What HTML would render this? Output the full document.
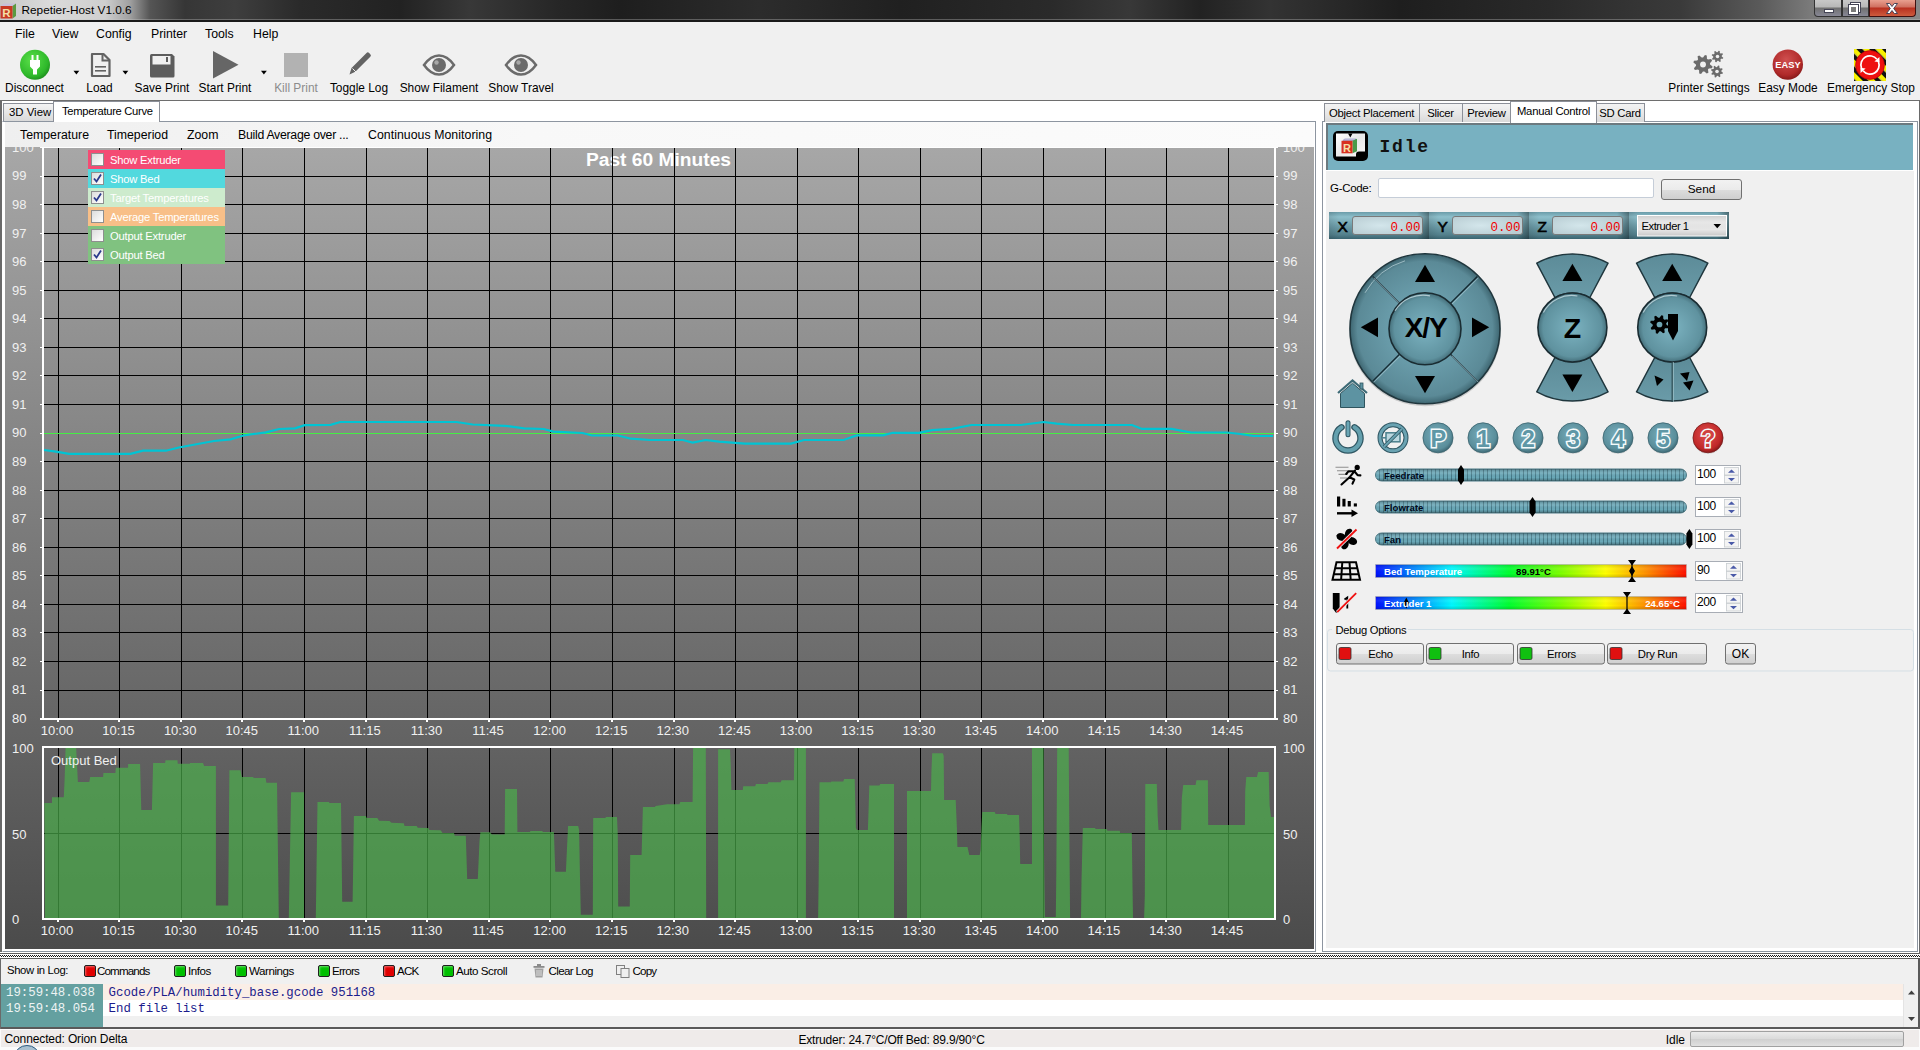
<!DOCTYPE html><html><head><meta charset="utf-8"><title>Repetier-Host</title><style>
*{box-sizing:border-box;margin:0;padding:0}
html,body{width:1920px;height:1050px;overflow:hidden;background:#f0f0f0;font-family:"Liberation Sans",sans-serif;color:#000}
.a{position:absolute}
.t{position:absolute;white-space:nowrap;line-height:1}
</style></head><body><div class="a" style="left:0;top:0;width:1920px;height:21px;background:linear-gradient(90deg,#c8c8c8 0px,#dadada 50px,#cfcfcf 105px,#a0a0a0 130px,#555 150px,#363636 185px,#3e3e3e 235px,#2a2a2a 300px,#222 400px,#383838 470px,#262626 560px,#1e1e1e 620px,#2c2c2c 760px,#202020 900px,#2a2a2a 1050px,#383838 1130px,#222 1200px,#333 1270px,#1e1e1e 1400px,#2a2a2a 1550px,#3a3a3a 1680px,#5a5a5a 1760px,#7a7a7a 1810px,#888 1920px)"></div><div class="a" style="left:0;top:19px;width:1920px;height:1px;background:rgba(200,200,200,0.35)"></div><div class="a" style="left:0;top:20px;width:1920px;height:2px;background:#1a1a1a"></div><svg class="a" style="left:0;top:2px" width="17" height="18"><path d="M1 4l3-2.5h12l-3 2.5z" fill="#c8c0d8"/><path d="M12.5 4l3.5-2.5v12.5l-3.5 2.5z" fill="#5a9a40"/><rect x="0.5" y="4" width="12" height="12.5" fill="#c83a24"/><text x="6.5" y="14.5" text-anchor="middle" font-family="Liberation Sans" font-weight="bold" font-size="11.5" fill="#f4e0a8">R</text></svg><div class="t" style="left:21.5px;top:4.8px;font-size:11.8px;color:#000">Repetier-Host V1.0.6</div><div class="a" style="left:1814px;top:0;width:28px;height:17px;border:1px solid #333;border-top:none;border-radius:0 0 0 4px;background:linear-gradient(#c8c8c8 0,#b8b8b8 7px,#707070 8px,#8a8a9a 17px)"></div><div class="a" style="left:1824px;top:9px;width:10px;height:4px;background:#fff;border:1px solid #445"></div><div class="a" style="left:1842px;top:0;width:27px;height:17px;border:1px solid #333;border-top:none;background:linear-gradient(#c8c8c8 0,#b8b8b8 7px,#707070 8px,#8a8a9a 17px)"></div><div class="a" style="left:1851px;top:3px;width:9px;height:9px;border:2px solid #fff;outline:1px solid #445"></div><div class="a" style="left:1849px;top:5px;width:9px;height:9px;border:2px solid #fff;background:#7a7a7a;outline:1px solid #445"></div><div class="a" style="left:1869px;top:0;width:47px;height:17px;border:1px solid #401010;border-top:none;border-radius:0 0 4px 0;background:linear-gradient(#e8a090 0,#d07060 7px,#b83020 8px,#d06040 17px)"></div><svg class="a" style="left:1884px;top:2px" width="16" height="13"><path d="M2.5 1.5h3.2l2.3 3l2.3-3h3.2l-3.8 5l3.8 5h-3.2l-2.3-3l-2.3 3h-3.2l3.8-5z" fill="#fff" stroke="#3a3a50" stroke-width="0.9"/></svg><div class="t" style="left:15px;top:27.59px;font-size:12.3px;">File</div><div class="t" style="left:52px;top:27.59px;font-size:12.3px;">View</div><div class="t" style="left:96px;top:27.59px;font-size:12.3px;">Config</div><div class="t" style="left:151px;top:27.59px;font-size:12.3px;">Printer</div><div class="t" style="left:205px;top:27.59px;font-size:12.3px;">Tools</div><div class="t" style="left:253px;top:27.59px;font-size:12.3px;">Help</div><div class="t" style="left:-165.5px;width:400px;text-align:center;top:83.23px;font-size:11.9px;color:#000">Disconnect</div><div class="t" style="left:-100.5px;width:400px;text-align:center;top:83.23px;font-size:11.9px;color:#000">Load</div><div class="t" style="left:-38.0px;width:400px;text-align:center;top:83.23px;font-size:11.9px;color:#000">Save Print</div><div class="t" style="left:25.0px;width:400px;text-align:center;top:83.23px;font-size:11.9px;color:#000">Start Print</div><div class="t" style="left:96.0px;width:400px;text-align:center;top:83.23px;font-size:11.9px;color:#8c8c8c">Kill Print</div><div class="t" style="left:159.0px;width:400px;text-align:center;top:83.23px;font-size:11.9px;color:#000">Toggle Log</div><div class="t" style="left:239.0px;width:400px;text-align:center;top:83.23px;font-size:11.9px;color:#000">Show Filament</div><div class="t" style="left:321.0px;width:400px;text-align:center;top:83.23px;font-size:11.9px;color:#000">Show Travel</div><div class="t" style="left:1509.0px;width:400px;text-align:center;top:83.23px;font-size:11.9px;color:#000">Printer Settings</div><div class="t" style="left:1588.0px;width:400px;text-align:center;top:83.23px;font-size:11.9px;color:#000">Easy Mode</div><div class="t" style="left:1671.0px;width:400px;text-align:center;top:83.23px;font-size:11.9px;color:#000">Emergency Stop</div><svg class="a" style="left:0;top:40px" width="1920" height="60" viewBox="0 40 1920 60"><defs><radialGradient id="gg" cx="0.4" cy="0.35" r="0.7"><stop offset="0" stop-color="#5be04a"/><stop offset="0.75" stop-color="#2eb82a"/><stop offset="1" stop-color="#1d8a1d"/></radialGradient><radialGradient id="rg" cx="0.4" cy="0.3" r="0.75"><stop offset="0" stop-color="#f05050"/><stop offset="0.7" stop-color="#c82020"/><stop offset="1" stop-color="#901010"/></radialGradient></defs><circle cx="35" cy="64.8" r="15" fill="url(#gg)"/><path d="M31.5 55h2v5h3v-5h2v5h1.5v6.5l-3 3v5h-4v-5l-3-3v-6.5h1.5z" fill="#fff"/><path d="M73.5 70.8h5.8l-2.9 3.6z" fill="#000"/><path d="M92 54h11.5l6 6v16h-17.5z" fill="none" stroke="#636363" stroke-width="2.2" stroke-linejoin="round"/><path d="M102.5 54v6.5h7" fill="none" stroke="#636363" stroke-width="2"/><rect x="95" y="66" width="11" height="1.6" fill="#636363"/><rect x="95" y="70" width="11" height="1.6" fill="#636363"/><path d="M122.5 70.8h5.8l-2.9 3.6z" fill="#000"/><path d="M150 55.5a1.5 1.5 0 0 1 1.5-1.5h20.5l2.5 2.5v19.5a1.5 1.5 0 0 1-1.5 1.5h-21.5a1.5 1.5 0 0 1-1.5-1.5z" fill="#5d5d5d"/><rect x="152.5" y="56" width="18" height="8.5" fill="#f0f0f0"/><rect x="166" y="57" width="2" height="5" fill="#5d5d5d"/><path d="M213 51v27.5l25.5-13.75z" fill="#666"/><path d="M261 70.8h5.8l-2.9 3.6z" fill="#000"/><rect x="284" y="53" width="24" height="24" fill="#b2b2b2"/><path d="M349.5 74.5l2-6.5 15-15a1.8 1.8 0 0 1 2.6 0l1.2 1.2a1.8 1.8 0 0 1 0 2.6l-15 15z" fill="#636363"/><path d="M352.5 68.5l3.5 3.5" stroke="#f0f0f0" stroke-width="1"/><path d="M424 65c5-7 10-9.5 15-9.5s10 2.5 15 9.5c-5 7-10 9.5-15 9.5s-10-2.5-15-9.5z" fill="none" stroke="#6b6b6b" stroke-width="2.5"/><circle cx="439" cy="65" r="7" fill="#6b6b6b"/><circle cx="436.5" cy="62.5" r="2.2" fill="#a8a8a8"/><path d="M506 65c5-7 10-9.5 15-9.5s10 2.5 15 9.5c-5 7-10 9.5-15 9.5s-10-2.5-15-9.5z" fill="none" stroke="#6b6b6b" stroke-width="2.5"/><circle cx="521" cy="65" r="7" fill="#6b6b6b"/><circle cx="518.5" cy="62.5" r="2.2" fill="#a8a8a8"/><polygon points="1712.60,66.45 1712.04,68.28 1708.85,68.44 1707.97,69.51 1708.41,72.67 1706.72,73.57 1704.35,71.43 1702.97,71.56 1701.05,74.10 1699.22,73.54 1699.06,70.35 1697.99,69.47 1694.83,69.91 1693.93,68.22 1696.07,65.85 1695.94,64.47 1693.40,62.55 1693.96,60.72 1697.15,60.56 1698.03,59.49 1697.59,56.33 1699.28,55.43 1701.65,57.57 1703.03,57.44 1704.95,54.90 1706.78,55.46 1706.94,58.65 1708.01,59.53 1711.17,59.09 1712.07,60.78 1709.93,63.15 1710.06,64.53" fill="#6b6b6b"/><circle cx="1703" cy="64.5" r="2.94" fill="#f0f0f0"/><polygon points="1723.28,57.67 1722.94,58.78 1721.02,58.87 1720.49,59.51 1720.76,61.42 1719.74,61.96 1718.31,60.67 1717.48,60.75 1716.33,62.28 1715.22,61.94 1715.13,60.02 1714.49,59.49 1712.58,59.76 1712.04,58.74 1713.33,57.31 1713.25,56.48 1711.72,55.33 1712.06,54.22 1713.98,54.13 1714.51,53.49 1714.24,51.58 1715.26,51.04 1716.69,52.33 1717.52,52.25 1718.67,50.72 1719.78,51.06 1719.87,52.98 1720.51,53.51 1722.42,53.24 1722.96,54.26 1721.67,55.69 1721.75,56.52" fill="#6b6b6b"/><circle cx="1717.5" cy="56.5" r="1.77" fill="#f0f0f0"/><polygon points="1722.98,72.71 1722.63,73.85 1720.64,73.95 1720.09,74.62 1720.37,76.58 1719.31,77.14 1717.84,75.81 1716.98,75.89 1715.79,77.48 1714.65,77.13 1714.55,75.14 1713.88,74.59 1711.92,74.87 1711.36,73.81 1712.69,72.34 1712.61,71.48 1711.02,70.29 1711.37,69.15 1713.36,69.05 1713.91,68.38 1713.63,66.42 1714.69,65.86 1716.16,67.19 1717.02,67.11 1718.21,65.52 1719.35,65.87 1719.45,67.86 1720.12,68.41 1722.08,68.13 1722.64,69.19 1721.31,70.66 1721.39,71.52" fill="#6b6b6b"/><circle cx="1717" cy="71.5" r="1.83" fill="#f0f0f0"/><defs><radialGradient id="rg2" cx="0.45" cy="0.35" r="0.7"><stop offset="0" stop-color="#d05050"/><stop offset="0.7" stop-color="#b02a2a"/><stop offset="1" stop-color="#7a1515"/></radialGradient></defs><circle cx="1787.8" cy="64.6" r="15.2" fill="url(#rg2)"/><text x="1788" y="68.2" text-anchor="middle" font-family="Liberation Sans" font-weight="bold" font-size="9.3" fill="#fff">EASY</text><defs><pattern id="haz" width="9" height="9" patternUnits="userSpaceOnUse" patternTransform="rotate(-45)"><rect width="4.5" height="9" fill="#111"/><rect x="4.5" width="4.5" height="9" fill="#f8f000"/></pattern></defs><rect x="1854" y="49" width="32" height="32" fill="url(#haz)"/><circle cx="1870" cy="65" r="14.5" fill="#ee1010" stroke="#a00" stroke-width="0.6"/><path d="M1861.5 68.1A9 9 0 0 1 1876.9 59.2 M1878.5 61.9A9 9 0 0 1 1863.1 70.8" fill="none" stroke="#fff" stroke-width="1.7"/><path d="M1879.6 62.3L1879.4 57L1874.4 61.4z M1860.4 67.7L1860.6 73L1865.6 68.6z" fill="#fff"/></svg><div class="a" style="left:0;top:100px;width:1920px;height:1px;background:#6e6e6e"></div><div class="a" style="left:0;top:101px;width:1322px;height:852px;background:#fff"></div><div class="a" style="left:0;top:101px;width:2px;height:851px;background:#6a6a6a"></div><div class="a" style="left:3px;top:103px;width:51px;height:19px;border:1px solid #8b8f98;border-bottom:none;background:linear-gradient(#f3f3f3,#e6e6e6 50%,#d8d8d8)"></div><div class="t" style="left:9px;top:107.35px;font-size:11.4px;">3D View</div><div class="a" style="left:2px;top:121px;width:1314px;height:831px;border:1px solid #8d95a0;border-left-color:#fff;background:#fff"></div><div class="a" style="left:53px;top:101px;width:107px;height:22px;border:1px solid #8b8f98;border-bottom:none;background:#fff"></div><div class="t" style="left:62px;top:106.02px;font-size:11.2px;letter-spacing:-0.3px">Temperature Curve</div><div class="a" style="left:5px;top:122px;width:1309px;height:25px;background:linear-gradient(90deg,#efefef,#f8f8f8 40%,#fbfbfb)"></div><div class="t" style="left:20px;top:128.59px;font-size:12.3px;letter-spacing:0px">Temperature</div><div class="t" style="left:107px;top:128.59px;font-size:12.3px;letter-spacing:0px">Timeperiod</div><div class="t" style="left:187px;top:128.59px;font-size:12.3px;letter-spacing:0px">Zoom</div><div class="t" style="left:238px;top:128.59px;font-size:12.3px;letter-spacing:-0.28px">Build Average over ...</div><div class="t" style="left:368px;top:128.59px;font-size:12.3px;letter-spacing:0.05px">Continuous Monitoring</div><svg class="a" style="left:0;top:0" width="1320" height="952" viewBox="0 0 1320 952" shape-rendering="crispEdges"><defs><linearGradient id="cbg" x1="0" y1="0" x2="0" y2="1"><stop offset="0" stop-color="#a7a7a7"/><stop offset="1" stop-color="#4b4b4b"/></linearGradient></defs><rect x="5" y="147" width="1309" height="802" fill="url(#cbg)"/><text x="658.5" y="165.8" text-anchor="middle" font-family="Liberation Sans" font-weight="bold" font-size="19.2" fill="#fff" shape-rendering="auto">Past 60 Minutes</text><rect x="58" y="147" width="1" height="571" fill="#000"/><rect x="57" y="720" width="2" height="2" fill="#fff"/><rect x="119" y="147" width="1" height="571" fill="#000"/><rect x="118" y="720" width="2" height="2" fill="#fff"/><rect x="181" y="147" width="1" height="571" fill="#000"/><rect x="180" y="720" width="2" height="2" fill="#fff"/><rect x="242" y="147" width="1" height="571" fill="#000"/><rect x="241" y="720" width="2" height="2" fill="#fff"/><rect x="304" y="147" width="1" height="571" fill="#000"/><rect x="303" y="720" width="2" height="2" fill="#fff"/><rect x="366" y="147" width="1" height="571" fill="#000"/><rect x="365" y="720" width="2" height="2" fill="#fff"/><rect x="427" y="147" width="1" height="571" fill="#000"/><rect x="426" y="720" width="2" height="2" fill="#fff"/><rect x="489" y="147" width="1" height="571" fill="#000"/><rect x="488" y="720" width="2" height="2" fill="#fff"/><rect x="550" y="147" width="1" height="571" fill="#000"/><rect x="549" y="720" width="2" height="2" fill="#fff"/><rect x="612" y="147" width="1" height="571" fill="#000"/><rect x="611" y="720" width="2" height="2" fill="#fff"/><rect x="674" y="147" width="1" height="571" fill="#000"/><rect x="673" y="720" width="2" height="2" fill="#fff"/><rect x="735" y="147" width="1" height="571" fill="#000"/><rect x="734" y="720" width="2" height="2" fill="#fff"/><rect x="797" y="147" width="1" height="571" fill="#000"/><rect x="796" y="720" width="2" height="2" fill="#fff"/><rect x="858" y="147" width="1" height="571" fill="#000"/><rect x="857" y="720" width="2" height="2" fill="#fff"/><rect x="920" y="147" width="1" height="571" fill="#000"/><rect x="919" y="720" width="2" height="2" fill="#fff"/><rect x="981" y="147" width="1" height="571" fill="#000"/><rect x="980" y="720" width="2" height="2" fill="#fff"/><rect x="1043" y="147" width="1" height="571" fill="#000"/><rect x="1042" y="720" width="2" height="2" fill="#fff"/><rect x="1105" y="147" width="1" height="571" fill="#000"/><rect x="1104" y="720" width="2" height="2" fill="#fff"/><rect x="1166" y="147" width="1" height="571" fill="#000"/><rect x="1165" y="720" width="2" height="2" fill="#fff"/><rect x="1228" y="147" width="1" height="571" fill="#000"/><rect x="1227" y="720" width="2" height="2" fill="#fff"/><rect x="44" y="176" width="1230" height="1" fill="#000"/><rect x="40" y="176" width="2" height="1" fill="#fff"/><rect x="1276" y="176" width="2" height="1" fill="#fff"/><rect x="44" y="204" width="1230" height="1" fill="#000"/><rect x="40" y="204" width="2" height="1" fill="#fff"/><rect x="1276" y="204" width="2" height="1" fill="#fff"/><rect x="44" y="233" width="1230" height="1" fill="#000"/><rect x="40" y="233" width="2" height="1" fill="#fff"/><rect x="1276" y="233" width="2" height="1" fill="#fff"/><rect x="44" y="261" width="1230" height="1" fill="#000"/><rect x="40" y="261" width="2" height="1" fill="#fff"/><rect x="1276" y="261" width="2" height="1" fill="#fff"/><rect x="44" y="290" width="1230" height="1" fill="#000"/><rect x="40" y="290" width="2" height="1" fill="#fff"/><rect x="1276" y="290" width="2" height="1" fill="#fff"/><rect x="44" y="318" width="1230" height="1" fill="#000"/><rect x="40" y="318" width="2" height="1" fill="#fff"/><rect x="1276" y="318" width="2" height="1" fill="#fff"/><rect x="44" y="347" width="1230" height="1" fill="#000"/><rect x="40" y="347" width="2" height="1" fill="#fff"/><rect x="1276" y="347" width="2" height="1" fill="#fff"/><rect x="44" y="375" width="1230" height="1" fill="#000"/><rect x="40" y="375" width="2" height="1" fill="#fff"/><rect x="1276" y="375" width="2" height="1" fill="#fff"/><rect x="44" y="404" width="1230" height="1" fill="#000"/><rect x="40" y="404" width="2" height="1" fill="#fff"/><rect x="1276" y="404" width="2" height="1" fill="#fff"/><rect x="44" y="433" width="1230" height="1" fill="#000"/><rect x="40" y="433" width="2" height="1" fill="#fff"/><rect x="1276" y="433" width="2" height="1" fill="#fff"/><rect x="44" y="461" width="1230" height="1" fill="#000"/><rect x="40" y="461" width="2" height="1" fill="#fff"/><rect x="1276" y="461" width="2" height="1" fill="#fff"/><rect x="44" y="490" width="1230" height="1" fill="#000"/><rect x="40" y="490" width="2" height="1" fill="#fff"/><rect x="1276" y="490" width="2" height="1" fill="#fff"/><rect x="44" y="518" width="1230" height="1" fill="#000"/><rect x="40" y="518" width="2" height="1" fill="#fff"/><rect x="1276" y="518" width="2" height="1" fill="#fff"/><rect x="44" y="547" width="1230" height="1" fill="#000"/><rect x="40" y="547" width="2" height="1" fill="#fff"/><rect x="1276" y="547" width="2" height="1" fill="#fff"/><rect x="44" y="575" width="1230" height="1" fill="#000"/><rect x="40" y="575" width="2" height="1" fill="#fff"/><rect x="1276" y="575" width="2" height="1" fill="#fff"/><rect x="44" y="604" width="1230" height="1" fill="#000"/><rect x="40" y="604" width="2" height="1" fill="#fff"/><rect x="1276" y="604" width="2" height="1" fill="#fff"/><rect x="44" y="632" width="1230" height="1" fill="#000"/><rect x="40" y="632" width="2" height="1" fill="#fff"/><rect x="1276" y="632" width="2" height="1" fill="#fff"/><rect x="44" y="661" width="1230" height="1" fill="#000"/><rect x="40" y="661" width="2" height="1" fill="#fff"/><rect x="1276" y="661" width="2" height="1" fill="#fff"/><rect x="44" y="690" width="1230" height="1" fill="#000"/><rect x="40" y="690" width="2" height="1" fill="#fff"/><rect x="1276" y="690" width="2" height="1" fill="#fff"/><rect x="42" y="147" width="2" height="573" fill="#fff"/><rect x="1274" y="147" width="2" height="573" fill="#fff"/><rect x="40" y="718" width="1238" height="2" fill="#fff"/><rect x="40" y="147" width="1238" height="1" fill="#fff"/><rect x="44" y="433" width="1230" height="1" fill="#44ee44"/></svg><svg class="a" style="left:0;top:0" width="1320" height="952" viewBox="0 0 1320 952"><polyline fill="none" stroke="#00c4d4" stroke-width="2.2" points="44,450 56,451.7 69,453.9 130.4,453.9 143,450.7 166,450.7 178.8,447.5 214,441 230.5,439.4 243.4,435.5 266,432.3 279,429 295,428.4 304.8,425.2 330.6,424.9 340.3,422 456.5,422 472.7,424.5 505,425.8 524,428.4 543.7,429 553.4,431.6 582.5,433 592,435.5 618,435.5 631,438.7 650,440 682.8,440 692.7,442.6 705.8,440 719,441.7 732,442.7 745,443.6 791,443.6 804,440 843.6,440 856.7,435.4 883,435.4 892.8,432.8 919,432.8 932,430.2 951.8,428.9 971.5,425 1020.7,425 1043.7,422 1056.8,423.6 1073,425 1132,425 1142,428.9 1171.6,428.9 1191,432.5 1227,432.5 1240.5,434 1253.7,436 1273,436"/></svg><svg class="a" style="left:0;top:0" width="1320" height="952" viewBox="0 0 1320 952"><rect x="58" y="748" width="1" height="170" fill="#000"/><rect x="57" y="920" width="2" height="2" fill="#fff"/><rect x="119" y="748" width="1" height="170" fill="#000"/><rect x="118" y="920" width="2" height="2" fill="#fff"/><rect x="181" y="748" width="1" height="170" fill="#000"/><rect x="180" y="920" width="2" height="2" fill="#fff"/><rect x="242" y="748" width="1" height="170" fill="#000"/><rect x="241" y="920" width="2" height="2" fill="#fff"/><rect x="304" y="748" width="1" height="170" fill="#000"/><rect x="303" y="920" width="2" height="2" fill="#fff"/><rect x="366" y="748" width="1" height="170" fill="#000"/><rect x="365" y="920" width="2" height="2" fill="#fff"/><rect x="427" y="748" width="1" height="170" fill="#000"/><rect x="426" y="920" width="2" height="2" fill="#fff"/><rect x="489" y="748" width="1" height="170" fill="#000"/><rect x="488" y="920" width="2" height="2" fill="#fff"/><rect x="550" y="748" width="1" height="170" fill="#000"/><rect x="549" y="920" width="2" height="2" fill="#fff"/><rect x="612" y="748" width="1" height="170" fill="#000"/><rect x="611" y="920" width="2" height="2" fill="#fff"/><rect x="674" y="748" width="1" height="170" fill="#000"/><rect x="673" y="920" width="2" height="2" fill="#fff"/><rect x="735" y="748" width="1" height="170" fill="#000"/><rect x="734" y="920" width="2" height="2" fill="#fff"/><rect x="797" y="748" width="1" height="170" fill="#000"/><rect x="796" y="920" width="2" height="2" fill="#fff"/><rect x="858" y="748" width="1" height="170" fill="#000"/><rect x="857" y="920" width="2" height="2" fill="#fff"/><rect x="920" y="748" width="1" height="170" fill="#000"/><rect x="919" y="920" width="2" height="2" fill="#fff"/><rect x="981" y="748" width="1" height="170" fill="#000"/><rect x="980" y="920" width="2" height="2" fill="#fff"/><rect x="1043" y="748" width="1" height="170" fill="#000"/><rect x="1042" y="920" width="2" height="2" fill="#fff"/><rect x="1105" y="748" width="1" height="170" fill="#000"/><rect x="1104" y="920" width="2" height="2" fill="#fff"/><rect x="1166" y="748" width="1" height="170" fill="#000"/><rect x="1165" y="920" width="2" height="2" fill="#fff"/><rect x="1228" y="748" width="1" height="170" fill="#000"/><rect x="1227" y="920" width="2" height="2" fill="#fff"/><rect x="44" y="833" width="1230" height="1" fill="#000"/><polygon fill="#4baf4c" fill-opacity="0.69" points="45,918.5 44.4,803.1 52.0,803.1 52.0,797.3 63.8,797.3 64.7,777.0 65.6,747.0 76.1,747.0 77.9,781.9 89.3,781.9 90.2,777.0 103.1,777.0 103.4,773.1 115.4,773.1 115.8,767.8 128.1,767.8 128.1,764.1 140.1,764.1 141.3,810.0 151.9,810.0 153.1,762.9 165.1,762.9 165.5,760.3 177.4,760.3 177.8,763.8 189.8,763.8 190.1,762.9 203.0,762.9 204.2,766.1 215.9,766.1 215.9,905.6 228.2,905.6 229.4,770.3 240.5,770.3 241.8,777.0 253.2,777.0 253.6,777.9 265.6,777.9 266.4,782.8 277.0,782.8 278.8,918.0 288.8,918.0 291.1,792.2 304.0,792.2 304.0,918.0 315.8,918.0 317.5,802.0 329.0,802.0 329.3,802.9 341.0,802.9 342.2,901.8 352.6,901.8 353.2,865.1 353.9,816.1 365.9,816.1 366.7,817.9 377.3,817.9 379.1,820.7 389.6,821.1 391.4,822.8 403.7,823.2 404.6,826.0 416.6,826.0 417.8,827.8 428.4,828.1 429.3,829.9 440.7,830.2 442.5,832.9 454.0,833.0 454.8,835.7 465.8,835.7 467.2,878.9 477.8,878.9 479.5,841.3 480.4,832.2 490.1,832.2 491.9,834.6 504.7,834.6 505.1,789.0 517.0,789.0 517.4,832.0 529.7,832.0 530.6,831.1 542.1,831.1 543.0,832.0 553.9,832.0 555.3,871.8 565.9,871.8 567.1,845.7 568.1,826.0 578.2,826.0 579.1,829.9 580.0,877.4 580.8,914.8 592.8,914.8 593.2,818.1 605.5,818.1 605.9,817.0 617.0,817.0 617.8,835.2 618.2,906.5 629.8,906.5 630.2,855.1 641.6,855.1 642.9,807.0 654.8,807.0 655.7,806.1 667.0,804.3 679.4,804.3 680.3,802.0 692.6,802.0 693.1,747.4 705.8,747.4 706.2,918.3 718.1,918.3 718.1,749.2 730.0,749.2 730.8,766.4 731.4,789.9 742.8,789.9 743.2,786.2 755.2,786.2 756.0,784.1 767.5,784.1 768.4,782.3 780.7,782.3 781.6,780.2 793.9,780.2 794.3,747.4 805.9,747.4 805.9,918.3 818.1,918.3 818.6,884.5 819.5,782.3 830.9,782.3 831.3,781.4 843.3,781.4 844.1,779.1 854.7,779.1 855.9,828.1 857.0,829.9 867.9,829.9 868.8,802.6 869.3,785.5 879.4,785.5 880.3,784.1 894.0,784.1 894.0,918.3 907.0,918.3 907.0,791.1 931.0,791.1 931.4,771.7 932.2,753.2 942.8,753.2 943.7,755.9 944.1,799.9 955.7,799.9 956.9,828.1 957.4,847.0 967.5,847.0 969.3,854.9 979.7,854.9 980.6,850.1 981.5,826.3 982.3,811.9 994.7,811.9 995.6,814.0 1007.0,814.0 1007.4,814.9 1019.0,814.9 1019.7,836.9 1020.2,863.9 1032.0,863.9 1032.0,747.4 1043.7,747.4 1044.0,853.7 1044.9,917.1 1055.8,917.1 1056.3,874.8 1057.2,747.4 1068.7,747.4 1069.6,861.6 1070.1,918.3 1081.0,918.3 1081.5,881.0 1082.8,828.1 1095.1,828.1 1095.5,829.0 1106.6,829.0 1107.4,830.7 1119.8,830.7 1120.1,832.9 1131.8,832.9 1132.5,886.3 1133.0,918.3 1144.1,918.3 1144.8,895.9 1145.3,784.1 1156.8,784.1 1157.7,815.8 1158.5,829.9 1181.1,829.9 1181.8,798.1 1183.2,784.9 1195.6,784.9 1196.4,780.2 1207.9,780.2 1208.2,824.9 1244.9,824.9 1245.2,791.1 1246.3,777.0 1256.9,777.0 1258.1,772.1 1268.7,772.1 1269.6,805.2 1271.0,817.0 1274.8,817.0 1274,918.5"/><rect x="42" y="746" width="1234" height="2" fill="#fff"/><rect x="42" y="746" width="2" height="174" fill="#fff"/><rect x="1274" y="746" width="2" height="174" fill="#fff"/><rect x="42" y="918" width="1234" height="2" fill="#fff"/></svg><div class="t" style="left:12px;top:140.90px;font-size:13px;color:#f0f0f0">100</div><div class="t" style="left:1283px;top:140.90px;font-size:13px;color:#f0f0f0">100</div><div class="t" style="left:12px;top:169.45px;font-size:13px;color:#f0f0f0">99</div><div class="t" style="left:1283px;top:169.45px;font-size:13px;color:#f0f0f0">99</div><div class="t" style="left:12px;top:198.01px;font-size:13px;color:#f0f0f0">98</div><div class="t" style="left:1283px;top:198.01px;font-size:13px;color:#f0f0f0">98</div><div class="t" style="left:12px;top:226.56px;font-size:13px;color:#f0f0f0">97</div><div class="t" style="left:1283px;top:226.56px;font-size:13px;color:#f0f0f0">97</div><div class="t" style="left:12px;top:255.12px;font-size:13px;color:#f0f0f0">96</div><div class="t" style="left:1283px;top:255.12px;font-size:13px;color:#f0f0f0">96</div><div class="t" style="left:12px;top:283.68px;font-size:13px;color:#f0f0f0">95</div><div class="t" style="left:1283px;top:283.68px;font-size:13px;color:#f0f0f0">95</div><div class="t" style="left:12px;top:312.23px;font-size:13px;color:#f0f0f0">94</div><div class="t" style="left:1283px;top:312.23px;font-size:13px;color:#f0f0f0">94</div><div class="t" style="left:12px;top:340.79px;font-size:13px;color:#f0f0f0">93</div><div class="t" style="left:1283px;top:340.79px;font-size:13px;color:#f0f0f0">93</div><div class="t" style="left:12px;top:369.34px;font-size:13px;color:#f0f0f0">92</div><div class="t" style="left:1283px;top:369.34px;font-size:13px;color:#f0f0f0">92</div><div class="t" style="left:12px;top:397.90px;font-size:13px;color:#f0f0f0">91</div><div class="t" style="left:1283px;top:397.90px;font-size:13px;color:#f0f0f0">91</div><div class="t" style="left:12px;top:426.46px;font-size:13px;color:#f0f0f0">90</div><div class="t" style="left:1283px;top:426.46px;font-size:13px;color:#f0f0f0">90</div><div class="t" style="left:12px;top:455.01px;font-size:13px;color:#f0f0f0">89</div><div class="t" style="left:1283px;top:455.01px;font-size:13px;color:#f0f0f0">89</div><div class="t" style="left:12px;top:483.57px;font-size:13px;color:#f0f0f0">88</div><div class="t" style="left:1283px;top:483.57px;font-size:13px;color:#f0f0f0">88</div><div class="t" style="left:12px;top:512.12px;font-size:13px;color:#f0f0f0">87</div><div class="t" style="left:1283px;top:512.12px;font-size:13px;color:#f0f0f0">87</div><div class="t" style="left:12px;top:540.68px;font-size:13px;color:#f0f0f0">86</div><div class="t" style="left:1283px;top:540.68px;font-size:13px;color:#f0f0f0">86</div><div class="t" style="left:12px;top:569.24px;font-size:13px;color:#f0f0f0">85</div><div class="t" style="left:1283px;top:569.24px;font-size:13px;color:#f0f0f0">85</div><div class="t" style="left:12px;top:597.79px;font-size:13px;color:#f0f0f0">84</div><div class="t" style="left:1283px;top:597.79px;font-size:13px;color:#f0f0f0">84</div><div class="t" style="left:12px;top:626.35px;font-size:13px;color:#f0f0f0">83</div><div class="t" style="left:1283px;top:626.35px;font-size:13px;color:#f0f0f0">83</div><div class="t" style="left:12px;top:654.90px;font-size:13px;color:#f0f0f0">82</div><div class="t" style="left:1283px;top:654.90px;font-size:13px;color:#f0f0f0">82</div><div class="t" style="left:12px;top:683.46px;font-size:13px;color:#f0f0f0">81</div><div class="t" style="left:1283px;top:683.46px;font-size:13px;color:#f0f0f0">81</div><div class="t" style="left:12px;top:712.02px;font-size:13px;color:#f0f0f0">80</div><div class="t" style="left:1283px;top:712.02px;font-size:13px;color:#f0f0f0">80</div><div class="t" style="left:-143.0px;width:400px;text-align:center;top:724.00px;font-size:13px;color:#f0f0f0">10:00</div><div class="t" style="left:-143.0px;width:400px;text-align:center;top:924.00px;font-size:13px;color:#f0f0f0">10:00</div><div class="t" style="left:-81.42px;width:400px;text-align:center;top:724.00px;font-size:13px;color:#f0f0f0">10:15</div><div class="t" style="left:-81.42px;width:400px;text-align:center;top:924.00px;font-size:13px;color:#f0f0f0">10:15</div><div class="t" style="left:-19.839999999999975px;width:400px;text-align:center;top:724.00px;font-size:13px;color:#f0f0f0">10:30</div><div class="t" style="left:-19.839999999999975px;width:400px;text-align:center;top:924.00px;font-size:13px;color:#f0f0f0">10:30</div><div class="t" style="left:41.74000000000001px;width:400px;text-align:center;top:724.00px;font-size:13px;color:#f0f0f0">10:45</div><div class="t" style="left:41.74000000000001px;width:400px;text-align:center;top:924.00px;font-size:13px;color:#f0f0f0">10:45</div><div class="t" style="left:103.32px;width:400px;text-align:center;top:724.00px;font-size:13px;color:#f0f0f0">11:00</div><div class="t" style="left:103.32px;width:400px;text-align:center;top:924.00px;font-size:13px;color:#f0f0f0">11:00</div><div class="t" style="left:164.89999999999998px;width:400px;text-align:center;top:724.00px;font-size:13px;color:#f0f0f0">11:15</div><div class="t" style="left:164.89999999999998px;width:400px;text-align:center;top:924.00px;font-size:13px;color:#f0f0f0">11:15</div><div class="t" style="left:226.48000000000002px;width:400px;text-align:center;top:724.00px;font-size:13px;color:#f0f0f0">11:30</div><div class="t" style="left:226.48000000000002px;width:400px;text-align:center;top:924.00px;font-size:13px;color:#f0f0f0">11:30</div><div class="t" style="left:288.06px;width:400px;text-align:center;top:724.00px;font-size:13px;color:#f0f0f0">11:45</div><div class="t" style="left:288.06px;width:400px;text-align:center;top:924.00px;font-size:13px;color:#f0f0f0">11:45</div><div class="t" style="left:349.64px;width:400px;text-align:center;top:724.00px;font-size:13px;color:#f0f0f0">12:00</div><div class="t" style="left:349.64px;width:400px;text-align:center;top:924.00px;font-size:13px;color:#f0f0f0">12:00</div><div class="t" style="left:411.22px;width:400px;text-align:center;top:724.00px;font-size:13px;color:#f0f0f0">12:15</div><div class="t" style="left:411.22px;width:400px;text-align:center;top:924.00px;font-size:13px;color:#f0f0f0">12:15</div><div class="t" style="left:472.79999999999995px;width:400px;text-align:center;top:724.00px;font-size:13px;color:#f0f0f0">12:30</div><div class="t" style="left:472.79999999999995px;width:400px;text-align:center;top:924.00px;font-size:13px;color:#f0f0f0">12:30</div><div class="t" style="left:534.38px;width:400px;text-align:center;top:724.00px;font-size:13px;color:#f0f0f0">12:45</div><div class="t" style="left:534.38px;width:400px;text-align:center;top:924.00px;font-size:13px;color:#f0f0f0">12:45</div><div class="t" style="left:595.96px;width:400px;text-align:center;top:724.00px;font-size:13px;color:#f0f0f0">13:00</div><div class="t" style="left:595.96px;width:400px;text-align:center;top:924.00px;font-size:13px;color:#f0f0f0">13:00</div><div class="t" style="left:657.54px;width:400px;text-align:center;top:724.00px;font-size:13px;color:#f0f0f0">13:15</div><div class="t" style="left:657.54px;width:400px;text-align:center;top:924.00px;font-size:13px;color:#f0f0f0">13:15</div><div class="t" style="left:719.12px;width:400px;text-align:center;top:724.00px;font-size:13px;color:#f0f0f0">13:30</div><div class="t" style="left:719.12px;width:400px;text-align:center;top:924.00px;font-size:13px;color:#f0f0f0">13:30</div><div class="t" style="left:780.6999999999999px;width:400px;text-align:center;top:724.00px;font-size:13px;color:#f0f0f0">13:45</div><div class="t" style="left:780.6999999999999px;width:400px;text-align:center;top:924.00px;font-size:13px;color:#f0f0f0">13:45</div><div class="t" style="left:842.28px;width:400px;text-align:center;top:724.00px;font-size:13px;color:#f0f0f0">14:00</div><div class="t" style="left:842.28px;width:400px;text-align:center;top:924.00px;font-size:13px;color:#f0f0f0">14:00</div><div class="t" style="left:903.8599999999999px;width:400px;text-align:center;top:724.00px;font-size:13px;color:#f0f0f0">14:15</div><div class="t" style="left:903.8599999999999px;width:400px;text-align:center;top:924.00px;font-size:13px;color:#f0f0f0">14:15</div><div class="t" style="left:965.44px;width:400px;text-align:center;top:724.00px;font-size:13px;color:#f0f0f0">14:30</div><div class="t" style="left:965.44px;width:400px;text-align:center;top:924.00px;font-size:13px;color:#f0f0f0">14:30</div><div class="t" style="left:1027.02px;width:400px;text-align:center;top:724.00px;font-size:13px;color:#f0f0f0">14:45</div><div class="t" style="left:1027.02px;width:400px;text-align:center;top:924.00px;font-size:13px;color:#f0f0f0">14:45</div><div class="t" style="left:12px;top:741.50px;font-size:13px;color:#f0f0f0">100</div><div class="t" style="left:1283px;top:741.50px;font-size:13px;color:#f0f0f0">100</div><div class="t" style="left:12px;top:827.50px;font-size:13px;color:#f0f0f0">50</div><div class="t" style="left:1283px;top:827.50px;font-size:13px;color:#f0f0f0">50</div><div class="t" style="left:12px;top:913.00px;font-size:13px;color:#f0f0f0">0</div><div class="t" style="left:1283px;top:913.00px;font-size:13px;color:#f0f0f0">0</div><div class="t" style="left:51px;top:754.00px;font-size:13px;color:#f0f0f0">Output Bed</div><div class="a" style="left:5px;top:122px;width:1309px;height:25px;background:linear-gradient(90deg,#efefef,#f8f8f8 40%,#fbfbfb)"></div><div class="t" style="left:20px;top:128.59px;font-size:12.3px;letter-spacing:0px">Temperature</div><div class="t" style="left:107px;top:128.59px;font-size:12.3px;letter-spacing:0px">Timeperiod</div><div class="t" style="left:187px;top:128.59px;font-size:12.3px;letter-spacing:0px">Zoom</div><div class="t" style="left:238px;top:128.59px;font-size:12.3px;letter-spacing:-0.28px">Build Average over ...</div><div class="t" style="left:368px;top:128.59px;font-size:12.3px;letter-spacing:0.05px">Continuous Monitoring</div><div class="a" style="left:88px;top:150px;width:137px;height:19px;background:#f44b73"></div><div class="a" style="left:91px;top:153px;width:13px;height:13px;border:1px solid #8e8f8f;background:linear-gradient(135deg,#dcdcdc,#fff)"></div><div class="t" style="left:110px;top:154.52px;font-size:11.2px;color:#fff;letter-spacing:-0.2px">Show Extruder</div><div class="a" style="left:88px;top:169px;width:137px;height:19px;background:#52d9de"></div><div class="a" style="left:91px;top:172px;width:13px;height:13px;border:1px solid #8e8f8f;background:linear-gradient(135deg,#dcdcdc,#fff)"></div><svg class="a" style="left:91px;top:172px" width="13" height="13"><path d="M3 6.5l2.5 3 4.5-7" fill="none" stroke="#2a3a8c" stroke-width="1.8"/></svg><div class="t" style="left:110px;top:173.52px;font-size:11.2px;color:#fff;letter-spacing:-0.2px">Show Bed</div><div class="a" style="left:88px;top:188px;width:137px;height:19px;background:#cdebcd"></div><div class="a" style="left:91px;top:191px;width:13px;height:13px;border:1px solid #8e8f8f;background:linear-gradient(135deg,#dcdcdc,#fff)"></div><svg class="a" style="left:91px;top:191px" width="13" height="13"><path d="M3 6.5l2.5 3 4.5-7" fill="none" stroke="#2a3a8c" stroke-width="1.8"/></svg><div class="t" style="left:110px;top:192.52px;font-size:11.2px;color:#fff;letter-spacing:-0.2px">Target Temperatures</div><div class="a" style="left:88px;top:207px;width:137px;height:19px;background:#f8bf88"></div><div class="a" style="left:91px;top:210px;width:13px;height:13px;border:1px solid #8e8f8f;background:linear-gradient(135deg,#dcdcdc,#fff)"></div><div class="t" style="left:110px;top:211.52px;font-size:11.2px;color:#fff;letter-spacing:-0.2px">Average Temperatures</div><div class="a" style="left:88px;top:226px;width:137px;height:19px;background:#80c280"></div><div class="a" style="left:91px;top:229px;width:13px;height:13px;border:1px solid #8e8f8f;background:linear-gradient(135deg,#dcdcdc,#fff)"></div><div class="t" style="left:110px;top:230.52px;font-size:11.2px;color:#fff;letter-spacing:-0.2px">Output Extruder</div><div class="a" style="left:88px;top:245px;width:137px;height:19px;background:#80c280"></div><div class="a" style="left:91px;top:248px;width:13px;height:13px;border:1px solid #8e8f8f;background:linear-gradient(135deg,#dcdcdc,#fff)"></div><svg class="a" style="left:91px;top:248px" width="13" height="13"><path d="M3 6.5l2.5 3 4.5-7" fill="none" stroke="#2a3a8c" stroke-width="1.8"/></svg><div class="t" style="left:110px;top:249.52px;font-size:11.2px;color:#fff;letter-spacing:-0.2px">Output Bed</div><div class="a" style="left:1316px;top:101px;width:604px;height:852px;background:#fff"></div><div class="a" style="left:1316px;top:949px;width:10px;height:4px;background:#fff"></div><div class="a" style="left:1322px;top:121px;width:596px;height:831px;border:1px solid #8d95a0;background:#fff"></div><div class="a" style="left:1326px;top:171px;width:589px;height:778px;background:#f0f0f0;border-right:1px solid #fff;border-bottom:1px solid #fff"></div><div class="a" style="left:1919px;top:100px;width:1px;height:929px;background:#6a6a6a"></div><div class="a" style="left:1324px;top:103px;width:96px;height:19px;border:1px solid #8b8f98;border-bottom:none;background:linear-gradient(#f3f3f3,#e8e8e8 50%,#d9d9d9)"></div><div class="t" style="left:1171.5px;width:400px;text-align:center;top:107.93px;font-size:11.3px;letter-spacing:-0.25px">Object Placement</div><div class="a" style="left:1419px;top:103px;width:44px;height:19px;border:1px solid #8b8f98;border-bottom:none;background:linear-gradient(#f3f3f3,#e8e8e8 50%,#d9d9d9)"></div><div class="t" style="left:1240.5px;width:400px;text-align:center;top:107.93px;font-size:11.3px;letter-spacing:-0.25px">Slicer</div><div class="a" style="left:1462px;top:103px;width:50px;height:19px;border:1px solid #8b8f98;border-bottom:none;background:linear-gradient(#f3f3f3,#e8e8e8 50%,#d9d9d9)"></div><div class="t" style="left:1286.5px;width:400px;text-align:center;top:107.93px;font-size:11.3px;letter-spacing:-0.25px">Preview</div><div class="a" style="left:1510px;top:101px;width:87px;height:22px;border:1px solid #8b8f98;border-bottom:none;background:#fff"></div><div class="t" style="left:1353.5px;width:400px;text-align:center;top:105.93px;font-size:11.3px;letter-spacing:-0.25px">Manual Control</div><div class="a" style="left:1596px;top:103px;width:49px;height:19px;border:1px solid #8b8f98;border-bottom:none;background:linear-gradient(#f3f3f3,#e8e8e8 50%,#d9d9d9)"></div><div class="t" style="left:1420.0px;width:400px;text-align:center;top:107.93px;font-size:11.3px;letter-spacing:-0.25px">SD Card</div><div class="a" style="left:1326px;top:123px;width:587px;height:47px;background:#78b1c1;border-left:2px solid #6c7a80;border-top:2px solid #6c7a80"></div><svg class="a" style="left:1332px;top:130px" width="38" height="32" viewBox="1332 130 38 32"><defs><linearGradient id="lgw" x1="0" y1="0" x2="1" y2="1"><stop offset="0" stop-color="#fff"/><stop offset="0.5" stop-color="#e8e8e8"/><stop offset="1" stop-color="#fafafa"/></linearGradient></defs><rect x="1333" y="131" width="35" height="30" rx="5" fill="#000"/><path d="M1336 133.5h29v18h-6a3 3 0 0 0-3 3v2h-20z" fill="url(#lgw)"/><path d="M1348 133.5h4.5l-2.25 4z" fill="#000"/><path d="M1343 140.5l1.5-1.5h11.5l-1.5 1.5z" fill="#d8d0e8" stroke="#6a70b0" stroke-width="0.5"/><path d="M1352.5 140.8l4.5-2v12.5l-4.5 2z" fill="#4a9a4a"/><rect x="1341.5" y="140.8" width="11" height="12.5" fill="#d83020"/><text x="1347" y="151.5" text-anchor="middle" font-family="Liberation Sans" font-weight="bold" font-size="11" fill="#f4e0a8">R</text></svg><div class="t" style="left:1379.5px;top:138.06px;font-size:18px;font-family:'Liberation Mono',monospace;font-weight:bold;color:#111;letter-spacing:1.8px">Idle</div><div class="t" style="left:1330px;top:182.77px;font-size:11.5px;letter-spacing:-0.3px">G-Code:</div><div class="a" style="left:1378px;top:178px;width:276px;height:20px;background:#fff;border:1px solid #c5cdd8;border-radius:2px"></div><div class="a" style="left:1661px;top:179px;width:81px;height:21px;border:1px solid #707070;border-radius:3px;background:linear-gradient(#f2f2f2,#ebebeb 50%,#dddddd 51%,#cfcfcf)"></div><div class="t" style="left:1501.5px;width:400px;text-align:center;top:184.31px;font-size:11.8px;">Send</div><svg class="a" style="left:0;top:0" width="1920" height="1050" viewBox="0 0 1920 1050"><defs>
<linearGradient id="secg" x1="0" y1="0" x2="0" y2="1"><stop offset="0" stop-color="#6b9ca9"/><stop offset="0.18" stop-color="#8dbfcb"/><stop offset="0.5" stop-color="#6f9fab"/><stop offset="0.85" stop-color="#527f8b"/><stop offset="1" stop-color="#3a6470"/></linearGradient>
<linearGradient id="sech" x1="0" y1="0" x2="1" y2="0"><stop offset="0" stop-color="#000" stop-opacity="0.1"/><stop offset="0.1" stop-color="#000" stop-opacity="0"/><stop offset="0.88" stop-color="#000" stop-opacity="0"/><stop offset="1" stop-color="#000" stop-opacity="0.35"/></linearGradient>
<radialGradient id="fldg" cx="0.4" cy="0.5" r="0.6"><stop offset="0" stop-color="#d3e6eb"/><stop offset="1" stop-color="#b9cdd3"/></radialGradient>
<radialGradient id="ringg" cx="0.5" cy="0.5" r="0.5"><stop offset="0.45" stop-color="#6a9dab"/><stop offset="0.9" stop-color="#5b8a97"/><stop offset="1" stop-color="#3e6671"/></radialGradient>
<radialGradient id="ctrg" cx="0.5" cy="0.5" r="0.5"><stop offset="0" stop-color="#7cb3c1"/><stop offset="0.85" stop-color="#5f929f"/><stop offset="1" stop-color="#456f7a"/></radialGradient>
<linearGradient id="wedg" x1="0" y1="0" x2="0" y2="1"><stop offset="0" stop-color="#5c8b98"/><stop offset="1" stop-color="#6a9ba8"/></linearGradient>
<radialGradient id="btng" cx="0.45" cy="0.4" r="0.6"><stop offset="0" stop-color="#78adbb"/><stop offset="0.8" stop-color="#5a8e9b"/><stop offset="1" stop-color="#3f6a76"/></radialGradient>
<radialGradient id="btnr" cx="0.45" cy="0.4" r="0.6"><stop offset="0" stop-color="#e05050"/><stop offset="0.8" stop-color="#c02828"/><stop offset="1" stop-color="#8a1a1a"/></radialGradient>
<linearGradient id="tempg" x1="0" y1="0" x2="1" y2="0"><stop offset="0" stop-color="#0010ff"/><stop offset="0.245" stop-color="#00f8ff"/><stop offset="0.43" stop-color="#00ff30"/><stop offset="0.6" stop-color="#80ff00"/><stop offset="0.74" stop-color="#ffff00"/><stop offset="0.87" stop-color="#ff9000"/><stop offset="1" stop-color="#ff1000"/></linearGradient>
<pattern id="ticks" width="4" height="20" patternUnits="userSpaceOnUse" x="1375"><rect width="4" height="20" fill="#6aa8b8"/><rect x="0" width="1" height="20" fill="#467a88"/></pattern>
<linearGradient id="trsh" x1="0" y1="0" x2="0" y2="1"><stop offset="0" stop-color="#000" stop-opacity="0.25"/><stop offset="0.35" stop-color="#fff" stop-opacity="0.12"/><stop offset="0.7" stop-color="#000" stop-opacity="0"/><stop offset="1" stop-color="#000" stop-opacity="0.3"/></linearGradient>
</defs><rect x="1329" y="212" width="100" height="27" fill="url(#secg)"/><rect x="1329" y="212" width="100" height="27" fill="url(#sech)"/><rect x="1352.5" y="216.5" width="70" height="18" rx="2.5" fill="url(#fldg)" stroke="#7a7a7a" stroke-width="1"/><text x="1337.5" y="231.8" font-family="Liberation Sans" font-size="15.5" fill="#000" stroke="#000" stroke-width="0.6">X</text><text x="1420.5" y="231.3" text-anchor="end" font-family="Liberation Mono" font-size="12.5" fill="#f00000">0.00</text><rect x="1429" y="212" width="100" height="27" fill="url(#secg)"/><rect x="1429" y="212" width="100" height="27" fill="url(#sech)"/><rect x="1452.5" y="216.5" width="70" height="18" rx="2.5" fill="url(#fldg)" stroke="#7a7a7a" stroke-width="1"/><text x="1437.5" y="231.8" font-family="Liberation Sans" font-size="15.5" fill="#000" stroke="#000" stroke-width="0.6">Y</text><text x="1520.5" y="231.3" text-anchor="end" font-family="Liberation Mono" font-size="12.5" fill="#f00000">0.00</text><rect x="1529" y="212" width="100" height="27" fill="url(#secg)"/><rect x="1529" y="212" width="100" height="27" fill="url(#sech)"/><rect x="1552.5" y="216.5" width="70" height="18" rx="2.5" fill="url(#fldg)" stroke="#7a7a7a" stroke-width="1"/><text x="1537.5" y="231.8" font-family="Liberation Sans" font-size="15.5" fill="#000" stroke="#000" stroke-width="0.6">Z</text><text x="1620.5" y="231.3" text-anchor="end" font-family="Liberation Mono" font-size="12.5" fill="#f00000">0.00</text><rect x="1629" y="212" width="100" height="27" fill="url(#secg)"/><rect x="1629" y="212" width="100" height="27" fill="url(#sech)"/><rect x="1637.5" y="215.5" width="89" height="20.5" fill="#e6e6e6" stroke="#fff" stroke-width="1"/><rect x="1638" y="216" width="88" height="19.5" fill="url(#trsh)" opacity="0.4"/><path d="M1713.5 224h7.5l-3.75 4.2z" fill="#000"/><text x="1641.5" y="230" font-family="Liberation Sans" font-size="11.2" letter-spacing="-0.45" fill="#000">Extruder 1</text><circle cx="1425" cy="330.3" r="76" fill="#000" opacity="0.15"/><circle cx="1425" cy="328.8" r="75" fill="url(#ringg)" stroke="#1f363d" stroke-width="1.6"/><path d="M1365 292.8 A70 70 0 0 1 1405 260.8" fill="none" stroke="#cfe4ea" stroke-width="1" opacity="0.6"/><line x1="1450.5" y1="354.3" x2="1477.3" y2="381.1" stroke="#142830" stroke-width="1.3"/><line x1="1451.7" y1="355.5" x2="1478.5" y2="382.3" stroke="#b8d4dc" stroke-width="0.9" opacity="0.7"/><line x1="1399.5" y1="354.3" x2="1372.7" y2="381.1" stroke="#142830" stroke-width="1.3"/><line x1="1400.7" y1="355.5" x2="1373.9" y2="382.3" stroke="#b8d4dc" stroke-width="0.9" opacity="0.7"/><line x1="1399.5" y1="303.3" x2="1372.7" y2="276.5" stroke="#142830" stroke-width="1.3"/><line x1="1400.7" y1="304.5" x2="1373.9" y2="277.7" stroke="#b8d4dc" stroke-width="0.9" opacity="0.7"/><line x1="1450.5" y1="303.3" x2="1477.3" y2="276.5" stroke="#142830" stroke-width="1.3"/><line x1="1451.7" y1="304.5" x2="1478.5" y2="277.7" stroke="#b8d4dc" stroke-width="0.9" opacity="0.7"/><circle cx="1425" cy="328.8" r="36" fill="url(#ctrg)" stroke="#1a2c32" stroke-width="1.6"/><path d="M1395 310.8 A33 33 0 0 1 1430 295.8" fill="none" stroke="#d8eaef" stroke-width="1.2" opacity="0.7"/><path d="M1415 282h20l-10 -17.2z" fill="#000" transform="translate(0,0)"/><path d="M1415 376h20l-10 17.2z" fill="#000"/><path d="M1378 317.5v19.7l-17.2 -9.85z" fill="#000"/><path d="M1472 317.5v19.7l17.2 -9.85z" fill="#000"/><text x="1425.7" y="337.2" text-anchor="middle" font-family="Liberation Sans" font-weight="bold" font-size="28" letter-spacing="-1" fill="#000">X/Y</text><path d="M1338 393l14.5-12.5l14.5 12.5" fill="none" stroke="#3d6a76" stroke-width="2.2"/><path d="M1340.5 393.5l12-10.3l12 10.3v14h-24z" fill="#5d93a2" stroke="#2e545e" stroke-width="1"/><rect x="1360" y="383" width="3" height="6" fill="#5d93a2" stroke="#2e545e" stroke-width="0.8"/><path d="M1536.8 263.2 A73.5 73.5 0 0 1 1608.0 263.2 L1589.7 297.8 A34 34 0 0 0 1555.1 297.8Z" fill="url(#wedg)" stroke="#1f363d" stroke-width="1.4"/><path d="M1536.8 391.8 A73.5 73.5 0 0 0 1608.0 391.8 L1589.7 357.2 A34 34 0 0 1 1555.1 357.2Z" fill="url(#wedg)" stroke="#1f363d" stroke-width="1.4"/><circle cx="1572.4" cy="327.5" r="34.5" fill="url(#ctrg)" stroke="#1a2c32" stroke-width="1.6"/><path d="M1543.4 312.5 A32 32 0 0 1 1577.4 296.0" fill="none" stroke="#d8eaef" stroke-width="1.2" opacity="0.7"/><path d="M1562.4 281h20l-10 -17.2z" fill="#000"/><path d="M1636.6 263.2 A73.5 73.5 0 0 1 1707.8 263.2 L1689.5 297.8 A34 34 0 0 0 1654.9 297.8Z" fill="url(#wedg)" stroke="#1f363d" stroke-width="1.4"/><path d="M1636.6 391.8 A73.5 73.5 0 0 0 1707.8 391.8 L1689.5 357.2 A34 34 0 0 1 1654.9 357.2Z" fill="url(#wedg)" stroke="#1f363d" stroke-width="1.4"/><circle cx="1672.2" cy="327.5" r="34.5" fill="url(#ctrg)" stroke="#1a2c32" stroke-width="1.6"/><path d="M1643.2 312.5 A32 32 0 0 1 1677.2 296.0" fill="none" stroke="#d8eaef" stroke-width="1.2" opacity="0.7"/><path d="M1662.2 281h20l-10 -17.2z" fill="#000"/><path d="M1562.4 374.5h20l-10 17.5z" fill="#000"/><text x="1572.4" y="338.3" text-anchor="middle" font-family="Liberation Sans" font-weight="bold" font-size="28.5" fill="#000">Z</text><polygon points="1668.81,326.39 1668.26,328.17 1665.17,328.32 1664.32,329.35 1664.75,332.42 1663.10,333.29 1660.81,331.21 1659.48,331.34 1657.61,333.81 1655.83,333.26 1655.68,330.17 1654.65,329.32 1651.58,329.75 1650.71,328.10 1652.79,325.81 1652.66,324.48 1650.19,322.61 1650.74,320.83 1653.83,320.68 1654.68,319.65 1654.25,316.58 1655.90,315.71 1658.19,317.79 1659.52,317.66 1661.39,315.19 1663.17,315.74 1663.32,318.83 1664.35,319.68 1667.42,319.25 1668.29,320.90 1666.21,323.19 1666.34,324.52" fill="#000"/><circle cx="1659.5" cy="324.5" r="2.85" fill="#6fa5b3"/><path d="M1668 314h10v17l-5 9.5l-5-9.5z" fill="#000"/><line x1="1672.2" y1="362" x2="1672.2" y2="402" stroke="#2a4850" stroke-width="1.2"/><line x1="1673.4" y1="362" x2="1673.4" y2="402" stroke="#a8c8d0" stroke-width="0.7"/><path d="M1654.5 375.5l9 4l-6.5 6.5z" fill="#000"/><path d="M1680 373.5l9.5-1.5l-2.5 9z M1683 382.5l10.5-2l-4 10z" fill="#000"/><path d="M1341.5 427.3 A12.5 12.5 0 1 0 1354.5 427.3" fill="none" stroke="#2f5662" stroke-width="6.5" stroke-linecap="round"/><path d="M1341.5 427.3 A12.5 12.5 0 1 0 1354.5 427.3" fill="none" stroke="#64a0ae" stroke-width="4" stroke-linecap="round"/><line x1="1348" y1="422.8" x2="1348" y2="434.8" stroke="#2f5662" stroke-width="5" stroke-linecap="round"/><line x1="1348" y1="422.8" x2="1348" y2="434.8" stroke="#6aa6b5" stroke-width="3" stroke-linecap="round"/><circle cx="1393" cy="437.8" r="13" fill="none" stroke="#2f5662" stroke-width="5"/><circle cx="1393" cy="437.8" r="13" fill="none" stroke="#6aa3b2" stroke-width="3"/><rect x="1386" y="432.8" width="14" height="9" fill="#bcd8e0" stroke="#4a7f8c" stroke-width="1.5"/><line x1="1382" y1="437.8" x2="1386" y2="437.8" stroke="#4a7f8c" stroke-width="1.5"/><line x1="1384" y1="446.8" x2="1402" y2="428.8" stroke="#2f5662" stroke-width="3.5"/><line x1="1384" y1="446.8" x2="1402" y2="428.8" stroke="#6aa3b2" stroke-width="2"/><circle cx="1438" cy="438.3" r="15.5" fill="#000" opacity="0.12"/><circle cx="1438" cy="437.8" r="15" fill="url(#btng)" stroke="#3a6470" stroke-width="0.8"/><text x="1438.3" y="447.0" text-anchor="middle" font-family="Liberation Sans" font-weight="bold" font-size="23.5" fill="#5e97a6" stroke="#f4fafb" stroke-width="3" paint-order="stroke">P</text><circle cx="1483" cy="438.3" r="15.5" fill="#000" opacity="0.12"/><circle cx="1483" cy="437.8" r="15" fill="url(#btng)" stroke="#3a6470" stroke-width="0.8"/><text x="1483.3" y="447.0" text-anchor="middle" font-family="Liberation Sans" font-weight="bold" font-size="23.5" fill="#5e97a6" stroke="#f4fafb" stroke-width="3" paint-order="stroke">1</text><circle cx="1528" cy="438.3" r="15.5" fill="#000" opacity="0.12"/><circle cx="1528" cy="437.8" r="15" fill="url(#btng)" stroke="#3a6470" stroke-width="0.8"/><text x="1528.3" y="447.0" text-anchor="middle" font-family="Liberation Sans" font-weight="bold" font-size="23.5" fill="#5e97a6" stroke="#f4fafb" stroke-width="3" paint-order="stroke">2</text><circle cx="1573" cy="438.3" r="15.5" fill="#000" opacity="0.12"/><circle cx="1573" cy="437.8" r="15" fill="url(#btng)" stroke="#3a6470" stroke-width="0.8"/><text x="1573.3" y="447.0" text-anchor="middle" font-family="Liberation Sans" font-weight="bold" font-size="23.5" fill="#5e97a6" stroke="#f4fafb" stroke-width="3" paint-order="stroke">3</text><circle cx="1618" cy="438.3" r="15.5" fill="#000" opacity="0.12"/><circle cx="1618" cy="437.8" r="15" fill="url(#btng)" stroke="#3a6470" stroke-width="0.8"/><text x="1618.3" y="447.0" text-anchor="middle" font-family="Liberation Sans" font-weight="bold" font-size="23.5" fill="#5e97a6" stroke="#f4fafb" stroke-width="3" paint-order="stroke">4</text><circle cx="1663" cy="438.3" r="15.5" fill="#000" opacity="0.12"/><circle cx="1663" cy="437.8" r="15" fill="url(#btng)" stroke="#3a6470" stroke-width="0.8"/><text x="1663.3" y="447.0" text-anchor="middle" font-family="Liberation Sans" font-weight="bold" font-size="23.5" fill="#5e97a6" stroke="#f4fafb" stroke-width="3" paint-order="stroke">5</text><circle cx="1708" cy="438.3" r="15.5" fill="#000" opacity="0.12"/><circle cx="1708" cy="437.8" r="15" fill="url(#btnr)" stroke="#7a1a1a" stroke-width="0.8"/><text x="1708.3" y="447.0" text-anchor="middle" font-family="Liberation Sans" font-weight="bold" font-size="23.5" fill="#d04040" stroke="#f4fafb" stroke-width="3" paint-order="stroke">?</text><rect x="1375.5" y="469" width="311" height="12" rx="6" fill="url(#ticks)" stroke="#4d7b87" stroke-width="1"/><rect x="1375.5" y="469" width="311" height="12" rx="6" fill="url(#trsh)"/><path d="M1461 465L1464 469.5V480.5L1461 485L1458 480.5V469.5z" fill="#000"/><rect x="1375.5" y="501" width="311" height="12" rx="6" fill="url(#ticks)" stroke="#4d7b87" stroke-width="1"/><rect x="1375.5" y="501" width="311" height="12" rx="6" fill="url(#trsh)"/><path d="M1532.5 497L1535.5 501.5V512.5L1532.5 517L1529.5 512.5V501.5z" fill="#000"/><rect x="1375.5" y="533" width="311" height="12" rx="6" fill="url(#ticks)" stroke="#4d7b87" stroke-width="1"/><rect x="1375.5" y="533" width="311" height="12" rx="6" fill="url(#trsh)"/><path d="M1689.4 529L1692.4 533.5V544.5L1689.4 549L1686.4 544.5V533.5z" fill="#000"/><rect x="1375.5" y="564.5" width="311" height="13" fill="url(#tempg)" stroke="#c0c0c0" stroke-width="0.6"/><rect x="1375.5" y="564.5" width="311" height="13" fill="url(#trsh)" opacity="0.6"/><path d="M1628 560h8l-4 5.5z M1628 582h8l-4 -5.5z" fill="#000"/><line x1="1632" y1="560" x2="1632" y2="582" stroke="#000" stroke-width="1.2"/><path d="M1632 566 l3 5 l-3 5 l-3 -5z" fill="#000"/><rect x="1375.5" y="596.5" width="311" height="13" fill="url(#tempg)" stroke="#c0c0c0" stroke-width="0.6"/><rect x="1375.5" y="596.5" width="311" height="13" fill="url(#trsh)" opacity="0.6"/><path d="M1623 592h8l-4 5.5z M1623 614h8l-4 -5.5z" fill="#000"/><line x1="1627" y1="592" x2="1627" y2="614" stroke="#000" stroke-width="1.2"/><path d="M1406.3 597.5l2.8 5.5l-2.8 5.5l-2.8 -5.5z" fill="#000"/><text x="1384" y="478.8" font-family="Liberation Sans" font-weight="bold" font-size="9.6" fill="#000a20">Feedrate</text><text x="1384" y="510.8" font-family="Liberation Sans" font-weight="bold" font-size="9.6" fill="#000a20">Flowrate</text><text x="1384" y="542.8" font-family="Liberation Sans" font-weight="bold" font-size="9.6" fill="#000a20">Fan</text><text x="1384" y="574.8" font-family="Liberation Sans" font-weight="bold" font-size="9.6" fill="#fff">Bed Temperature</text><text x="1384" y="606.8" font-family="Liberation Sans" font-weight="bold" font-size="9.6" fill="#fff">Extruder 1</text><text x="1533.5" y="574.8" text-anchor="middle" font-family="Liberation Sans" font-weight="bold" font-size="9.6" fill="#000">89.91°C</text><text x="1680" y="606.8" text-anchor="end" font-family="Liberation Sans" font-weight="bold" font-size="9.6" fill="#fff">24.65°C</text><rect x="1695.5" y="465.5" width="45" height="19" fill="#fff" stroke="#a8adb5" stroke-width="1"/><rect x="1724.5" y="467.5" width="14" height="7.5" fill="#f4f4f4" stroke="#c8ccd0" stroke-width="0.8"/><rect x="1724.5" y="475.5" width="14" height="7.5" fill="#f4f4f4" stroke="#c8ccd0" stroke-width="0.8"/><path d="M1728.0 472.8h7l-3.5 -3.3z M1728.0 478h7l-3.5 3.3z" fill="#4a5aa8"/><text x="1697" y="478.2" font-family="Liberation Sans" font-size="12" letter-spacing="-0.4" fill="#000">100</text><rect x="1695.5" y="497.5" width="45" height="19" fill="#fff" stroke="#a8adb5" stroke-width="1"/><rect x="1724.5" y="499.5" width="14" height="7.5" fill="#f4f4f4" stroke="#c8ccd0" stroke-width="0.8"/><rect x="1724.5" y="507.5" width="14" height="7.5" fill="#f4f4f4" stroke="#c8ccd0" stroke-width="0.8"/><path d="M1728.0 504.8h7l-3.5 -3.3z M1728.0 510h7l-3.5 3.3z" fill="#4a5aa8"/><text x="1697" y="510.2" font-family="Liberation Sans" font-size="12" letter-spacing="-0.4" fill="#000">100</text><rect x="1695.5" y="529.5" width="45" height="19" fill="#fff" stroke="#a8adb5" stroke-width="1"/><rect x="1724.5" y="531.5" width="14" height="7.5" fill="#f4f4f4" stroke="#c8ccd0" stroke-width="0.8"/><rect x="1724.5" y="539.5" width="14" height="7.5" fill="#f4f4f4" stroke="#c8ccd0" stroke-width="0.8"/><path d="M1728.0 536.8h7l-3.5 -3.3z M1728.0 542h7l-3.5 3.3z" fill="#4a5aa8"/><text x="1697" y="542.2" font-family="Liberation Sans" font-size="12" letter-spacing="-0.4" fill="#000">100</text><rect x="1695.5" y="561.5" width="47" height="19" fill="#fff" stroke="#a8adb5" stroke-width="1"/><rect x="1726.5" y="563.5" width="14" height="7.5" fill="#f4f4f4" stroke="#c8ccd0" stroke-width="0.8"/><rect x="1726.5" y="571.5" width="14" height="7.5" fill="#f4f4f4" stroke="#c8ccd0" stroke-width="0.8"/><path d="M1730.0 568.8h7l-3.5 -3.3z M1730.0 574h7l-3.5 3.3z" fill="#4a5aa8"/><text x="1697" y="574.2" font-family="Liberation Sans" font-size="12" letter-spacing="-0.4" fill="#000">90</text><rect x="1695.5" y="593.5" width="47" height="19" fill="#fff" stroke="#a8adb5" stroke-width="1"/><rect x="1726.5" y="595.5" width="14" height="7.5" fill="#f4f4f4" stroke="#c8ccd0" stroke-width="0.8"/><rect x="1726.5" y="603.5" width="14" height="7.5" fill="#f4f4f4" stroke="#c8ccd0" stroke-width="0.8"/><path d="M1730.0 600.8h7l-3.5 -3.3z M1730.0 606h7l-3.5 3.3z" fill="#4a5aa8"/><text x="1697" y="606.2" font-family="Liberation Sans" font-size="12" letter-spacing="-0.4" fill="#000">200</text><path d="M1335.5 467.2h13 M1337 470.8h11 M1338.5 474.4h9 M1340 478h7" stroke="#777" stroke-width="1.1" opacity="0.8"/><circle cx="1357.2" cy="467.4" r="2.6" fill="#000"/><path d="M1355 470.5l-5.5 6.8 M1349.5 477.3l-8 7.2 M1349.5 477.3l4.8 2.2l-1.8 4.2 M1354.2 471l-5.8 0.4l-2.2 2.6 M1355 472l2.6 3.2l2.8 0.2" fill="none" stroke="#000" stroke-width="2.1" stroke-linecap="round" stroke-linejoin="round"/><rect x="1337" y="496.5" width="3.2" height="10" fill="#000"/><rect x="1342.4" y="498.8" width="3.1" height="7.7" fill="#000"/><rect x="1347.7" y="501" width="3.1" height="5.5" fill="#000"/><rect x="1353.8" y="503.4" width="3.1" height="3.1" fill="#000"/><path d="M1337 513.3h15" stroke="#000" stroke-width="2.4"/><path d="M1351.5 509.5l6.5 3.8l-6.5 3.8z" fill="#000"/><g transform="translate(1346.8,539) rotate(20)"><ellipse cx="0" cy="-5.8" rx="3.8" ry="5" fill="#000"/><ellipse cx="0" cy="5.8" rx="3.8" ry="5" fill="#000"/><ellipse cx="-5.8" cy="0" rx="5" ry="3.8" fill="#000"/><ellipse cx="5.8" cy="0" rx="5" ry="3.8" fill="#000"/></g><line x1="1337" y1="548.5" x2="1356.5" y2="529.5" stroke="#f0f0f0" stroke-width="3.6"/><line x1="1337" y1="548.5" x2="1356.5" y2="529.5" stroke="#f01010" stroke-width="1.8"/><path d="M1336.5 562.2h19.5l4 17.6h-27.5z M1334.9 568.3h23.2 M1333.8 574.2h25.5 M1342.3 562.2l-1.2 17.6 M1349.5 562.2l1.2 17.6" fill="none" stroke="#000" stroke-width="2"/><path d="M1332.8 593h6.8v15.5l-3.4 4.5l-3.4-4.5z" fill="#000"/><path d="M1344.5 599.5l2.8-2v11" fill="none" stroke="#000" stroke-width="1.8"/><line x1="1337.2" y1="612.2" x2="1356.2" y2="593.2" stroke="#f0f0f0" stroke-width="3.4"/><line x1="1337.2" y1="612.2" x2="1356.2" y2="593.2" stroke="#f01010" stroke-width="1.8"/><rect x="1327.5" y="629.5" width="586" height="41.5" rx="3" fill="none" stroke="#d5dfe5" stroke-width="1"/><rect x="1332" y="624" width="76" height="10" fill="#f0f0f0"/><text x="1335.5" y="634.3" font-family="Liberation Sans" font-size="11.2" letter-spacing="-0.3" fill="#000">Debug Options</text><linearGradient id="btn2" x1="0" y1="0" x2="0" y2="1"><stop offset="0" stop-color="#f2f2f2"/><stop offset="0.5" stop-color="#ebebeb"/><stop offset="0.51" stop-color="#dddddd"/><stop offset="1" stop-color="#cfcfcf"/></linearGradient><rect x="1336.5" y="643.5" width="87" height="20.5" rx="2.5" fill="url(#btn2)" stroke="#707070" stroke-width="1"/><rect x="1339" y="647.5" width="12" height="12" rx="1.5" fill="#e01010" stroke="#303030" stroke-width="0.8"/><text x="1380.5" y="658" text-anchor="middle" font-family="Liberation Sans" font-size="11.3" letter-spacing="-0.3" fill="#000">Echo</text><rect x="1426.5" y="643.5" width="87" height="20.5" rx="2.5" fill="url(#btn2)" stroke="#707070" stroke-width="1"/><rect x="1429" y="647.5" width="12" height="12" rx="1.5" fill="#10c010" stroke="#303030" stroke-width="0.8"/><text x="1470.5" y="658" text-anchor="middle" font-family="Liberation Sans" font-size="11.3" letter-spacing="-0.3" fill="#000">Info</text><rect x="1517.5" y="643.5" width="87" height="20.5" rx="2.5" fill="url(#btn2)" stroke="#707070" stroke-width="1"/><rect x="1520" y="647.5" width="12" height="12" rx="1.5" fill="#10c010" stroke="#303030" stroke-width="0.8"/><text x="1561.5" y="658" text-anchor="middle" font-family="Liberation Sans" font-size="11.3" letter-spacing="-0.3" fill="#000">Errors</text><rect x="1607.5" y="643.5" width="99" height="20.5" rx="2.5" fill="url(#btn2)" stroke="#707070" stroke-width="1"/><rect x="1610" y="647.5" width="12" height="12" rx="1.5" fill="#e01010" stroke="#303030" stroke-width="0.8"/><text x="1657.5" y="658" text-anchor="middle" font-family="Liberation Sans" font-size="11.3" letter-spacing="-0.3" fill="#000">Dry Run</text><rect x="1725.5" y="643.5" width="30" height="20.5" rx="2.5" fill="url(#btn2)" stroke="#707070" stroke-width="1"/><text x="1740.5" y="658" text-anchor="middle" font-family="Liberation Sans" font-size="12" fill="#000">OK</text></svg><svg class="a" style="left:0;top:953px" width="1920" height="6" shape-rendering="crispEdges"><defs><pattern id="zz" width="2" height="6" patternUnits="userSpaceOnUse"><rect width="2" height="6" fill="#fff"/><rect x="0" y="0" width="2" height="1" fill="#606060"/><rect x="0" y="2" width="1" height="1" fill="#111"/><rect x="1" y="3" width="1" height="1" fill="#111"/><rect x="0" y="5" width="2" height="1" fill="#606060"/></pattern></defs><rect width="1920" height="6" fill="url(#zz)"/></svg><div class="a" style="left:0;top:959px;width:1920px;height:25px;background:#f0f0f0"></div><div class="t" style="left:7px;top:965.43px;font-size:11.3px;letter-spacing:-0.35px">Show in Log:</div><div class="a" style="left:84px;top:965px;width:12px;height:12px;border-radius:2px;background:#e00000;border:1px solid #202020;box-shadow:inset 1px 1px 2px rgba(255,255,255,0.4)"></div><div class="t" style="left:97px;top:965.18px;font-size:11.6px;letter-spacing:-0.85px">Commands</div><div class="a" style="left:174px;top:965px;width:12px;height:12px;border-radius:2px;background:#00c000;border:1px solid #202020;box-shadow:inset 1px 1px 2px rgba(255,255,255,0.4)"></div><div class="t" style="left:188px;top:965.18px;font-size:11.6px;letter-spacing:-0.45px">Infos</div><div class="a" style="left:235px;top:965px;width:12px;height:12px;border-radius:2px;background:#00c000;border:1px solid #202020;box-shadow:inset 1px 1px 2px rgba(255,255,255,0.4)"></div><div class="t" style="left:249px;top:965.18px;font-size:11.6px;letter-spacing:-0.45px">Warnings</div><div class="a" style="left:318px;top:965px;width:12px;height:12px;border-radius:2px;background:#00c000;border:1px solid #202020;box-shadow:inset 1px 1px 2px rgba(255,255,255,0.4)"></div><div class="t" style="left:332px;top:965.18px;font-size:11.6px;letter-spacing:-0.75px">Errors</div><div class="a" style="left:383px;top:965px;width:12px;height:12px;border-radius:2px;background:#e00000;border:1px solid #202020;box-shadow:inset 1px 1px 2px rgba(255,255,255,0.4)"></div><div class="t" style="left:397px;top:965.18px;font-size:11.6px;letter-spacing:-0.8px">ACK</div><div class="a" style="left:442px;top:965px;width:12px;height:12px;border-radius:2px;background:#00c000;border:1px solid #202020;box-shadow:inset 1px 1px 2px rgba(255,255,255,0.4)"></div><div class="t" style="left:456px;top:965.18px;font-size:11.6px;letter-spacing:-0.45px">Auto Scroll</div><svg class="a" style="left:533px;top:964px" width="12" height="14"><rect x="0.5" y="2" width="11" height="1.8" fill="#8a8a8a"/><rect x="4" y="0" width="4" height="2" fill="#8a8a8a"/><path d="M1.5 4.5h9l-1 9h-7z" fill="#a0a0a0"/><path d="M4 6v6 M6 6v6 M8 6v6" stroke="#ececec" stroke-width="0.8"/></svg><div class="t" style="left:548.5px;top:965.18px;font-size:11.6px;letter-spacing:-0.65px">Clear Log</div><svg class="a" style="left:616px;top:964px" width="14" height="14"><rect x="0.5" y="1.5" width="8" height="9" fill="#f0f0f0" stroke="#808080"/><rect x="5" y="4.5" width="8" height="9" fill="#f0f0f0" stroke="#808080"/></svg><div class="t" style="left:632.5px;top:965.18px;font-size:11.6px;letter-spacing:-0.8px">Copy</div><div class="a" style="left:0;top:984px;width:1920px;height:44px;background:#f0f0f0"></div><div class="a" style="left:103px;top:984px;width:1800px;height:16px;background:#faeee6"></div><div class="a" style="left:103px;top:1000px;width:1800px;height:16px;background:#fff"></div><div class="a" style="left:0;top:984px;width:103px;height:43px;background:#64a0a0"></div><div class="t" style="left:6px;top:986.55px;font-size:12.35px;font-family:'Liberation Mono',monospace;color:#eef4f4">19:59:48.038</div><div class="t" style="left:6px;top:1002.55px;font-size:12.35px;font-family:'Liberation Mono',monospace;color:#eef4f4">19:59:48.054</div><div class="t" style="left:108.6px;top:986.55px;font-size:12.35px;font-family:'Liberation Mono',monospace;color:#1c1c8c">Gcode/PLA/humidity_base.gcode 951168</div><div class="t" style="left:108.6px;top:1002.55px;font-size:12.35px;font-family:'Liberation Mono',monospace;color:#1c1c8c">End file list</div><div class="a" style="left:1903px;top:984px;width:17px;height:43px;background:#f0f0f0"></div><svg class="a" style="left:1903px;top:984px" width="17" height="43"><path d="M5 10.5h7l-3.5-4z M5 33h7l-3.5 4z" fill="#404040"/></svg><div class="a" style="left:0;top:1027px;width:1920px;height:2px;background:#5a5a5a"></div><div class="a" style="left:1918px;top:958px;width:2px;height:71px;background:#5a5a5a"></div><div class="a" style="left:0;top:958px;width:1px;height:71px;background:#6a6a6a"></div><div class="a" style="left:0;top:1029px;width:1920px;height:1px;background:#fbfbfb"></div><div class="a" style="left:1903px;top:984px;width:1px;height:43px;background:#e4e4e4"></div><div class="a" style="left:0;top:1029px;width:1920px;height:21px;background:#fbfbfb"></div><div class="a" style="left:1px;top:1030px;width:1918px;height:17px;background:#efebea"></div><svg class="a" style="left:12px;top:1044px" width="30" height="6"><ellipse cx="15" cy="12" rx="12" ry="10.5" fill="#a8c0d0" stroke="#2a5a80" stroke-width="1"/></svg><div class="t" style="left:4.5px;top:1033.44px;font-size:12px;letter-spacing:-0.12px">Connected: Orion Delta</div><div class="t" style="left:798.5px;top:1033.84px;font-size:12px;letter-spacing:-0.19px">Extruder: 24.7°C/Off Bed: 89.9/90°C</div><div class="t" style="left:1665.7px;top:1033.84px;font-size:12px;">Idle</div><div class="a" style="left:1690px;top:1031px;width:214px;height:16px;border:1px solid #a0a0a0;border-radius:2px;background:linear-gradient(#eaeaea,#dadada 50%,#cfcfcf 51%,#e0e0e0)"></div></body></html>
